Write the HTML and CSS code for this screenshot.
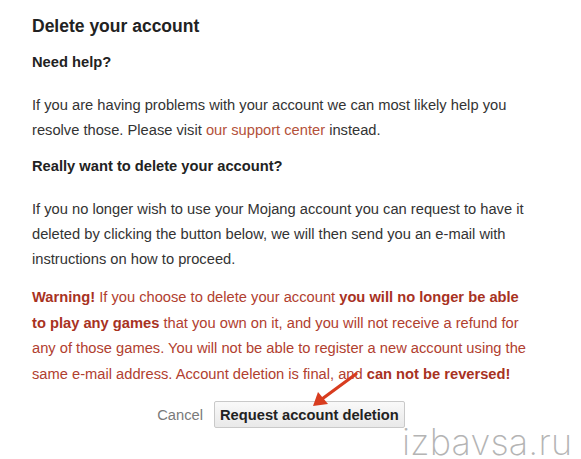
FILE: index.html
```html
<!DOCTYPE html>
<html lang="en">
<head>
    <meta charset="UTF-8">
    <title>Delete your account</title>
    <link rel="stylesheet" href="styles.css">
</head>
<body>
    <div class="page">
        <h1>Delete your account</h1>

        <h2>Need help?</h2>
        <p>If you are having problems with your account we can most likely help you resolve those. Please visit <a href="#">our support center</a> instead.</p>

        <h2>Really want to delete your account?</h2>
        <p>If you no longer wish to use your Mojang account you can request to have it deleted by clicking the button below, we will then send you an e-mail with instructions on how to proceed.</p>

        <p class="warning"><strong>Warning!</strong> If you choose to delete your account <strong>you will no longer be able to play any games</strong> that you own on it, and you will not receive a refund for any of those games. You will not be able to register a new account using the same e-mail address. Account deletion is final, and <strong>can not be reversed!</strong></p>

        <div class="actions">
            <a href="#" class="cancel">Cancel</a>
            <button class="btn">Request account deletion</button>
        </div>
    </div>

    <!-- arrow and watermark lie over the page -->
    <svg class="arrow" width="80" height="60" viewBox="0 0 80 60">
        <line x1="64" y1="12" x2="30" y2="37" stroke="#d83c1f" stroke-width="3.2" stroke-linecap="round"/>
        <polygon points="21,44 26,30 36,42" fill="#d83c1f"/>
    </svg>
    <div class="watermark">izbavsa.ru</div>
</body>
</html>
```

FILE: styles.css
```css
/* base */
body {
    margin: 0;
    background: #ffffff;
    color: #333333;
    font-family: "Liberation Sans", Arial, sans-serif;
    font-size: 14.7px;
}

.page {
    width: 498px;
    padding: 13px 0 0 32px;
}

h1 {
    font-size: 17.5px;
    line-height: 26px;
    margin: 0;
    color: #222222;
}

h2 {
    font-size: 14.7px;
    line-height: 25px;
    margin: 11px 0 18px;
    color: #222222;
}

p {
    margin: 0;
    line-height: 25px;
}

a {
    color: #b4513a;
    text-decoration: none;
}

/* warning block */
.warning {
    margin-top: 13px;
    line-height: 25.5px;
    color: #b1402f;
}

.warning strong {
    color: #a8321f;
}

/* buttons */
.actions {
    display: flex;
    justify-content: center;
    align-items: center;
    gap: 11px;
    margin-top: 14px;
}

.cancel {
    color: #7a7a7a;
}

.btn {
    height: 27px;
    padding: 0 5px;
    font-family: "Liberation Sans", Arial, sans-serif;
    font-size: 14.7px;
    font-weight: bold;
    color: #222222;
    background: linear-gradient(#f9f9f9, #e9e9e9);
    border: 1px solid #c9c9c9;
    border-radius: 2px;
}

/* overlays */
.arrow {
    position: absolute;
    left: 292px;
    top: 362px;
}

.watermark {
    position: absolute;
    left: 402px;
    top: 427px;
    font-family: Inter, "DejaVu Sans", sans-serif;
    font-weight: 200;
    font-size: 36px;
    line-height: 30px;
    letter-spacing: 0.2px;
    color: #b4b4b4;
}
```
